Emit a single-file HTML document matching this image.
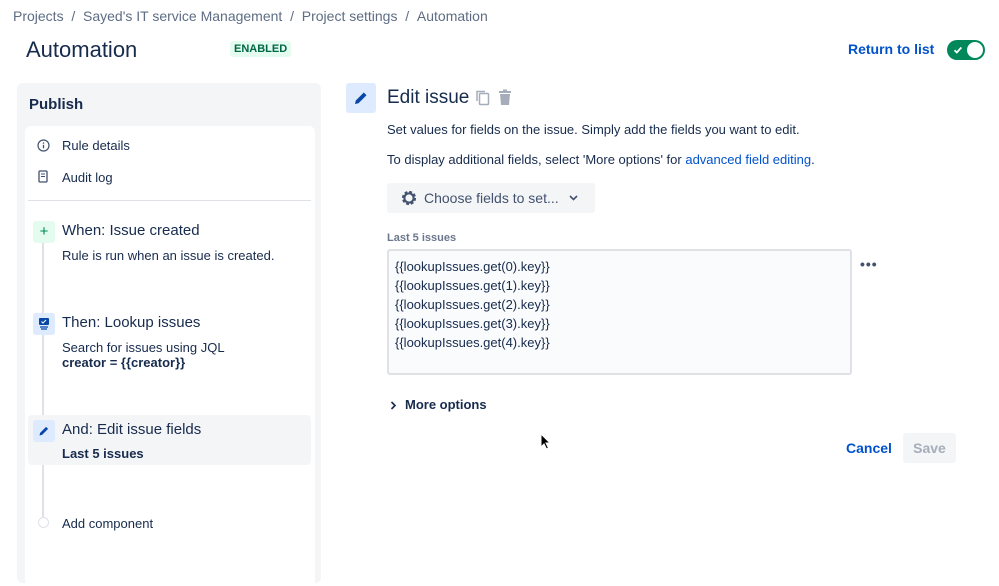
<!DOCTYPE html>
<html><head><meta charset="utf-8"><style>
*{box-sizing:border-box;margin:0;padding:0}
body{width:999px;height:571px;overflow:hidden;background:#fff;font-family:"Liberation Sans",Arial,sans-serif;color:#172b4d;position:relative}
.a{position:absolute;white-space:nowrap}
</style></head><body>
<div class="a" style="left:13px;top:8px;font-size:14px;color:#5e6c84">Projects&nbsp;&nbsp;/&nbsp;&nbsp;Sayed's IT service Management&nbsp;&nbsp;/&nbsp;&nbsp;Project settings&nbsp;&nbsp;/&nbsp;&nbsp;Automation</div>
<div class="a" style="left:26px;top:37px;font-size:22px;font-weight:500;color:#172b4d">Automation</div>
<div class="a" style="left:230px;top:41px;height:16px;padding:0 4px;background:#e3fcef;color:#006644;font-size:11px;font-weight:bold;line-height:16px;border-radius:3px">ENABLED</div>
<div class="a" style="left:848px;top:41px;font-size:14px;font-weight:bold;color:#0052cc">Return to list</div>
<div class="a" style="left:947px;top:40px;width:38px;height:20px;border-radius:10px;background:#00875a">
 <svg class="a" style="left:6px;top:5px" width="10" height="10" viewBox="0 0 10 10"><path d="M1.5 5.2l2.3 2.3 4.5-5" stroke="#fff" stroke-width="1.8" fill="none"/></svg>
 <div class="a" style="left:20px;top:2px;width:16px;height:16px;border-radius:50%;background:#fff"></div>
</div>
<div class="a" style="left:17px;top:83px;width:304px;height:500px;background:#f4f5f7;border-radius:6px"></div>
<div class="a" style="left:29px;top:96px;font-size:15px;font-weight:bold;color:#172b4d">Publish</div>
<div class="a" style="left:25px;top:126px;width:290px;height:460px;background:#fff;border-radius:6px"></div>
<svg class="a" style="left:37px;top:139px" width="13" height="13" viewBox="0 0 13 13"><circle cx="6.5" cy="6.5" r="5.5" fill="none" stroke="#42526e" stroke-width="1.2"/><path d="M6.5 5.8v3.5" stroke="#42526e" stroke-width="1.3"/><circle cx="6.5" cy="4" r=".8" fill="#42526e"/></svg>
<div class="a" style="left:62px;top:138px;font-size:13px">Rule details</div>
<svg class="a" style="left:38px;top:170px" width="11" height="14" viewBox="0 0 11 14"><rect x="1" y="1" width="8" height="11" rx="1" fill="none" stroke="#42526e" stroke-width="1.3"/><path d="M3 4h4M3 6.5h4" stroke="#42526e" stroke-width="1"/></svg>
<div class="a" style="left:62px;top:170px;font-size:13px">Audit log</div>
<div class="a" style="left:28px;top:200px;width:283px;height:1px;background:#dfe1e6"></div>
<div class="a" style="left:42px;top:240px;width:2px;height:282px;background:#dfe1e6"></div>
<div class="a" style="left:28px;top:415px;width:283px;height:50px;background:#f4f5f7;border-radius:4px"></div>
<div class="a" style="left:33px;top:221px;width:22px;height:22px;background:#e3fcef;border-radius:3px;color:#00875a;text-align:center;line-height:22px;font-size:15px">+</div>
<div class="a" style="left:62px;top:222px;font-size:15px">When: Issue created</div>
<div class="a" style="left:62px;top:248px;font-size:13px">Rule is run when an issue is created.</div>
<div class="a" style="left:33px;top:313px;width:22px;height:22px;background:#deebff;border-radius:3px"></div>
<svg class="a" style="left:38px;top:317px" width="12" height="13" viewBox="0 0 12 13"><rect x="1" y="1" width="10" height="7" rx="1" fill="#0747a6"/><path d="M3.5 4.5l1.5 1.5 3-3" stroke="#fff" stroke-width="1" fill="none"/><path d="M2 10h8M3 12h6" stroke="#0747a6" stroke-width="1.2"/></svg>
<div class="a" style="left:62px;top:314px;font-size:15px">Then: Lookup issues</div>
<div class="a" style="left:62px;top:340px;font-size:13px">Search for issues using JQL</div>
<div class="a" style="left:62px;top:355px;font-size:13px;font-weight:bold">creator = {{creator}}</div>
<div class="a" style="left:33px;top:420px;width:22px;height:22px;background:#deebff;border-radius:3px"></div>
<svg class="a" style="left:38px;top:425px" width="12" height="12" viewBox="0 0 12 12"><path d="M1.5 10.5l.6-2.6 6-6 2 2-6 6z" fill="#0747a6"/></svg>
<div class="a" style="left:62px;top:421px;font-size:15px">And: Edit issue fields</div>
<div class="a" style="left:62px;top:446px;font-size:13px;font-weight:bold">Last 5 issues</div>
<div class="a" style="left:38px;top:517px;width:11px;height:11px;border-radius:50%;border:1.5px solid #dfe1e6;background:#fff"></div>
<div class="a" style="left:62px;top:516px;font-size:13px">Add component</div>

<div class="a" style="left:346px;top:83px;width:30px;height:30px;background:#deebff;border-radius:3px"></div>
<svg class="a" style="left:353px;top:90px" width="16" height="16" viewBox="0 0 16 16"><path d="M2 14l.8-3.5 8-8 2.7 2.7-8 8z" fill="#0747a6"/></svg>
<div class="a" style="left:387px;top:87px;font-size:19px;font-weight:500">Edit issue</div>
<svg class="a" style="left:475px;top:89px" width="16" height="18" viewBox="0 0 16 18"><rect x="4.5" y="4.5" width="9" height="11" rx="1" fill="none" stroke="#a5adba" stroke-width="1.5"/><path d="M2 12V2.5h8" fill="none" stroke="#a5adba" stroke-width="1.5"/></svg>
<svg class="a" style="left:497px;top:89px" width="16" height="18" viewBox="0 0 16 18"><rect x="2" y="2" width="12" height="2" fill="#a5adba"/><rect x="6" y="0.5" width="4" height="2" fill="#a5adba"/><path d="M3 5h10l-1 11H4z" fill="#a5adba"/></svg>
<div class="a" style="left:387px;top:122px;font-size:13px">Set values for fields on the issue. Simply add the fields you want to edit.</div>
<div class="a" style="left:387px;top:152px;font-size:13px">To display additional fields, select 'More options' for <span style="color:#0052cc">advanced field editing</span>.</div>
<div class="a" style="left:387px;top:183px;width:208px;height:30px;background:#f4f5f7;border-radius:3px"></div>
<svg class="a" style="left:400px;top:189px" width="18" height="18" viewBox="0 0 18 18"><circle cx="9" cy="9" r="5.5" fill="none" stroke="#42526e" stroke-width="3.2" stroke-dasharray="2.6 1.72"/><circle cx="9" cy="9" r="4.6" fill="none" stroke="#42526e" stroke-width="2"/></svg>
<div class="a" style="left:424px;top:190px;font-size:14px;font-weight:500;color:#42526e">Choose fields to set...</div>
<svg class="a" style="left:569px;top:195px" width="9" height="6" viewBox="0 0 9 6"><path d="M1 1l3.5 3.5L8 1" stroke="#42526e" stroke-width="1.6" fill="none"/></svg>
<div class="a" style="left:387px;top:232px;font-size:11px;font-weight:bold;color:#6b778c">Last 5 issues</div>
<div class="a" style="left:387px;top:249px;width:465px;height:126px;background:#fafbfc;border:2px solid #dfe1e6;border-radius:3px"></div>
<div class="a" style="left:395px;top:257px;font-size:13px;line-height:19px;white-space:pre">{{lookupIssues.get(0).key}}
{{lookupIssues.get(1).key}}
{{lookupIssues.get(2).key}}
{{lookupIssues.get(3).key}}
{{lookupIssues.get(4).key}}</div>
<div class="a" style="left:860px;top:256px;font-size:14px;font-weight:bold;color:#42526e;letter-spacing:1px">•••</div>
<svg class="a" style="left:390px;top:401px" width="7" height="9" viewBox="0 0 7 9"><path d="M1.5 1l3.5 3.5L1.5 8" stroke="#172b4d" stroke-width="1.6" fill="none"/></svg>
<div class="a" style="left:405px;top:397px;font-size:13px;font-weight:bold">More options</div>
<svg class="a" style="left:540px;top:433px" width="12" height="17" viewBox="0 0 12 17"><path d="M1 1v13l3-3 2.5 5 2-1-2.5-5h4z" fill="#000" stroke="#fff" stroke-width="1"/></svg>
<div class="a" style="left:846px;top:440px;font-size:14px;font-weight:bold;color:#0052cc">Cancel</div>
<div class="a" style="left:903px;top:433px;width:53px;height:30px;background:#f4f5f7;border-radius:3px;color:#a5adba;font-size:14px;font-weight:bold;text-align:center;line-height:30px">Save</div>
</body></html>
